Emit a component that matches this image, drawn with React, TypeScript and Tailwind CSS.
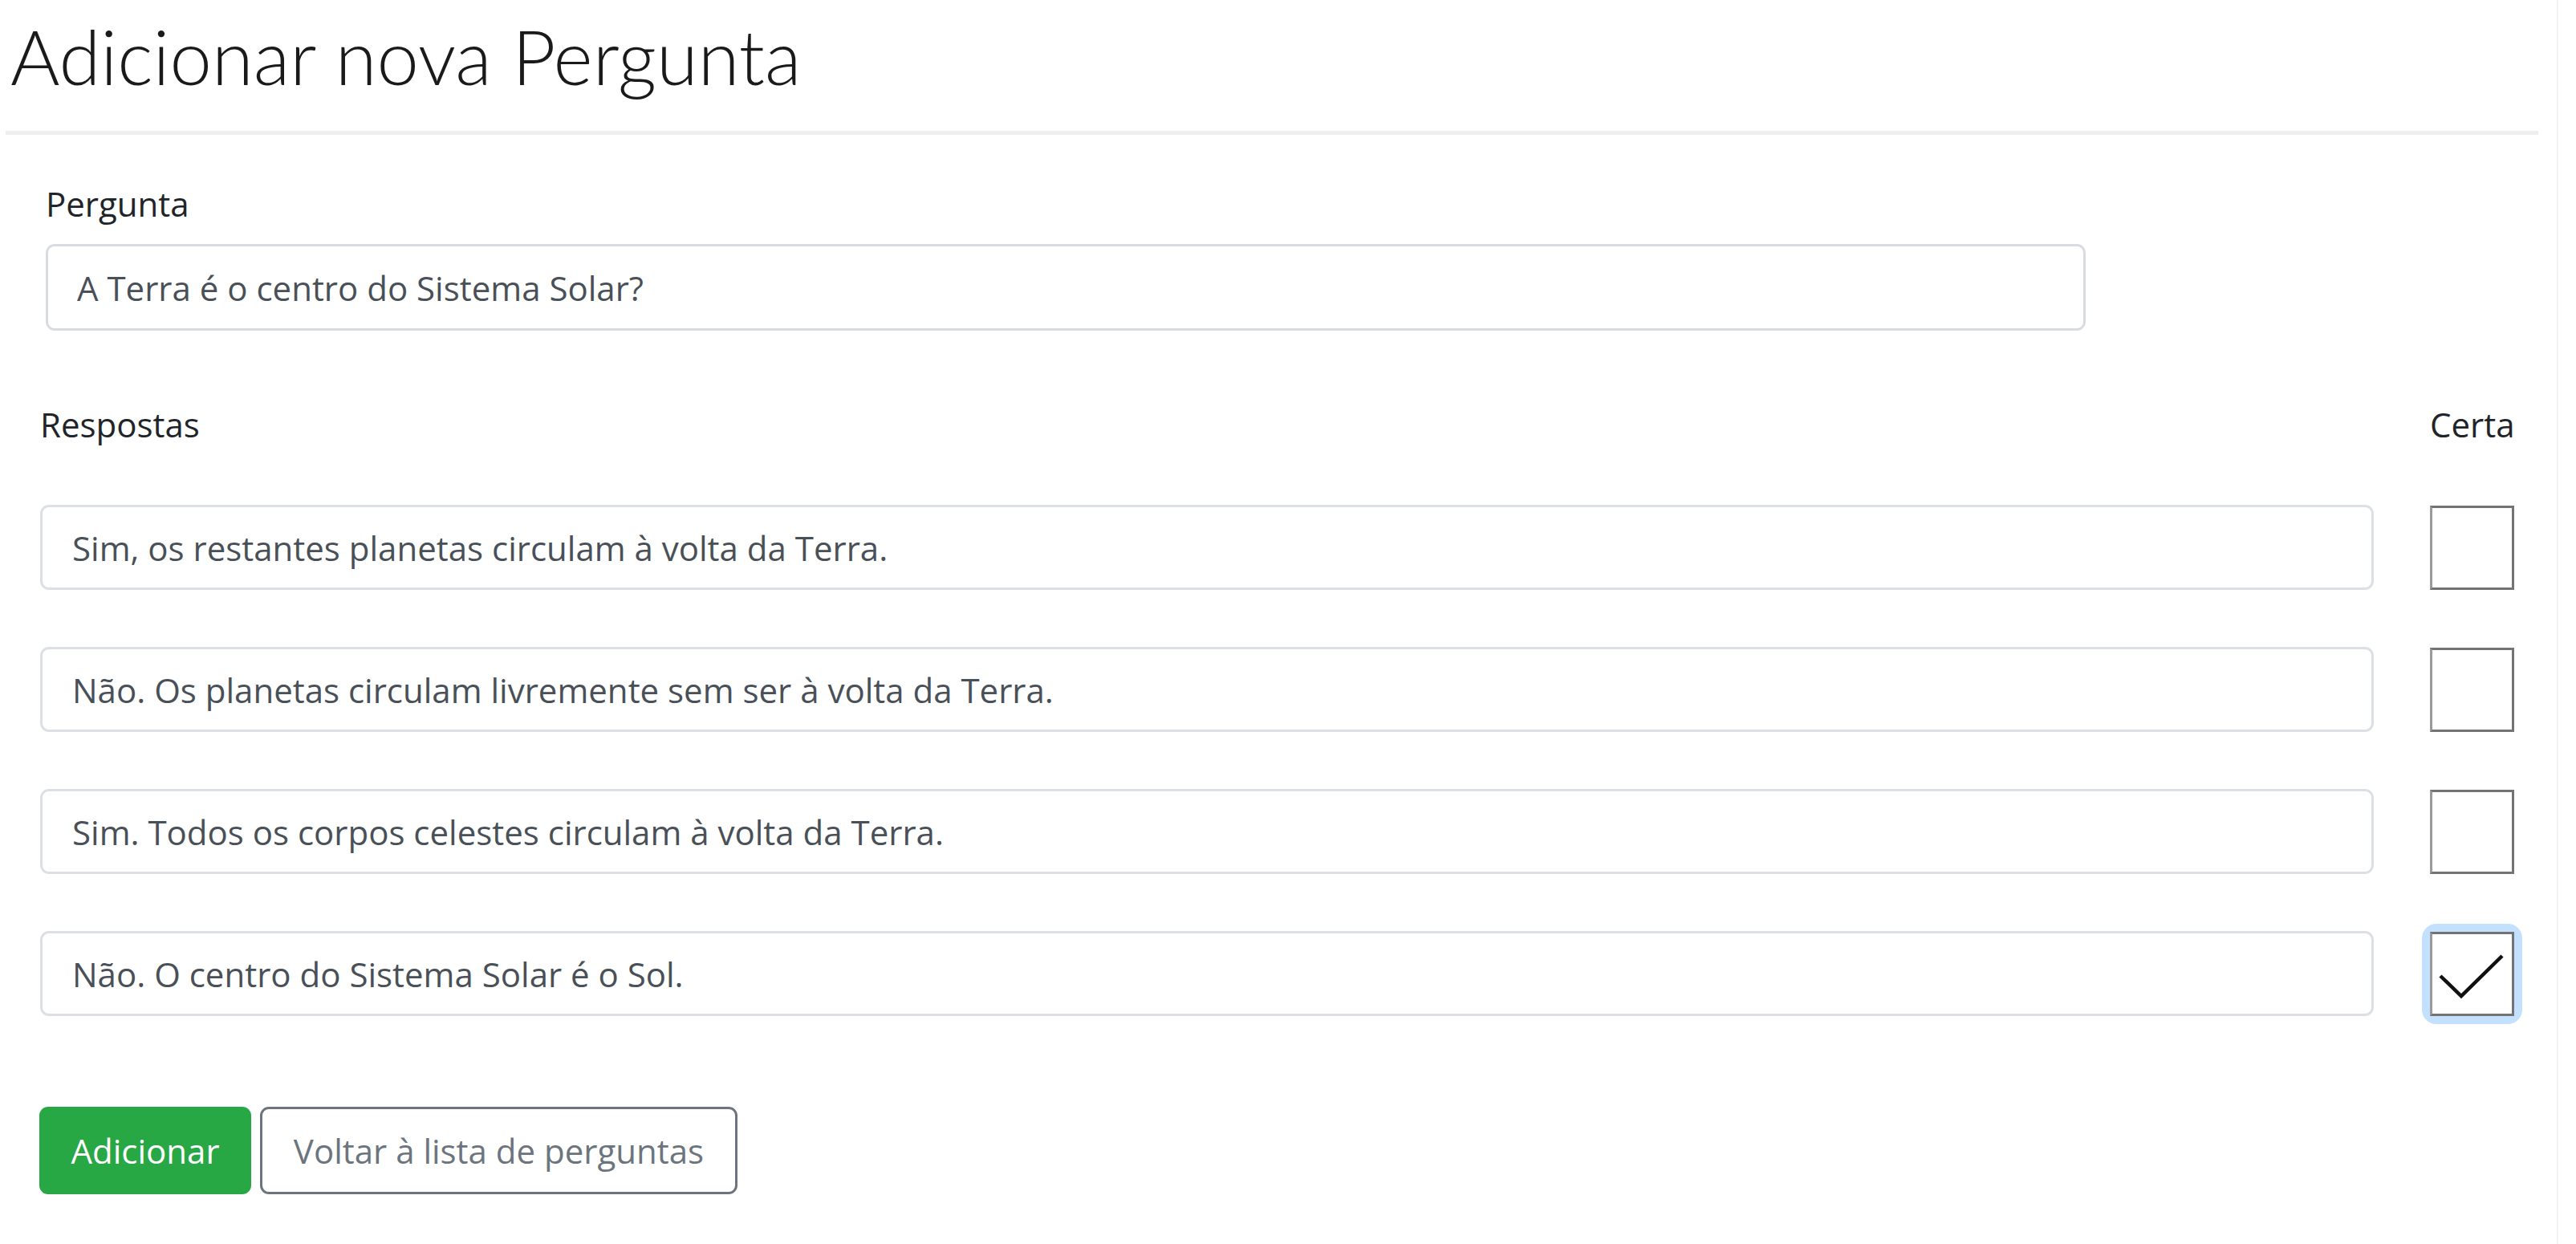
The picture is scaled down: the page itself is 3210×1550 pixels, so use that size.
import { useState } from 'react';

const answers = [
  'Sim, os restantes planetas circulam à volta da Terra.',
  'Não. Os planetas circulam livremente sem ser à volta da Terra.',
  'Sim. Todos os corpos celestes circulam à volta da Terra.',
  'Não. O centro do Sistema Solar é o Sol.',
];

const CheckBox = ({ checked, onToggle }: { checked: boolean; onToggle: () => void }) => (
  <button type="button" onClick={onToggle} className="relative w-[105px] h-[105px] shrink-0 cursor-pointer">
    {checked && <span className="absolute -inset-[10px] rounded-[18px] bg-[#c4e0ff]" />}
    <span className="absolute inset-0 bg-white border-[3px] border-[#737373] border-l-[#9a9a9a]">
      {checked && (
        <svg viewBox="0 0 99 99" className="w-full h-full">
          <path d="M10 52 L36 77 L87 27" fill="none" stroke="#111" strokeWidth="4.5" />
        </svg>
      )}
    </span>
  </button>
);

export default function App() {
  const [question, setQuestion] = useState('A Terra é o centro do Sistema Solar?');
  const [texts, setTexts] = useState(answers);
  const [correct, setCorrect] = useState(3);

  return (
    <div className="h-[1550px] overflow-hidden bg-white font-['Open_Sans',sans-serif] text-[#212529]">
      <div className="w-[3188px] h-[1550px] border-r-2 border-[#f2f2f2] px-[7px]">
        <h1 className="pt-[23px] pl-[6px] text-[94px] leading-none font-light font-['Lato',sans-serif] text-[#1a1a1a]">
          Adicionar nova Pergunta
        </h1>
        <div className="mt-[46px] h-[5px] w-[3156px] bg-[#eeeeee]" />

        <div className="ml-[50px] mt-[54px] w-[2542px]">
          <label className="block text-[42px] leading-[63px]">Pergunta</label>
          <input
            value={question}
            onChange={(e) => setQuestion(e.target.value)}
            className="mt-[19px] block w-full h-[108px] px-[36px] text-[42px] text-[#495057] bg-white border-[3px] border-[#d8dce0] rounded-[11px] outline-none"
          />
        </div>

        <div className="ml-[43px] mt-[85px] w-[3083px]">
          <div className="flex gap-[70px] text-[42px] leading-[63px]">
            <span className="flex-1">Respostas</span>
            <span className="w-[105px]">Certa</span>
          </div>

          <div className="mt-[69px] flex flex-col gap-[71px]">
            {texts.map((t, i) => (
              <div key={i} className="flex items-center gap-[70px]">
                <input
                  value={t}
                  onChange={(e) => setTexts(texts.map((x, j) => (j === i ? e.target.value : x)))}
                  className="flex-1 h-[106px] px-[37px] text-[42px] text-[#495057] bg-white border-[3px] border-[#dcdfe3] rounded-[11px] outline-none"
                />
                <CheckBox checked={correct === i} onToggle={() => setCorrect(i)} />
              </div>
            ))}
          </div>
        </div>

        <div className="ml-[42px] mt-[113px] flex gap-[11px]">
          <button className="w-[264px] h-[109px] rounded-[11px] bg-[#28a745] text-white text-[42px]">
            Adicionar
          </button>
          <button className="w-[595px] h-[109px] rounded-[11px] border-[3px] border-[#6c757d] text-[#6c757d] text-[42px] bg-white">
            Voltar à lista de perguntas
          </button>
        </div>
      </div>
    </div>
  );
}
